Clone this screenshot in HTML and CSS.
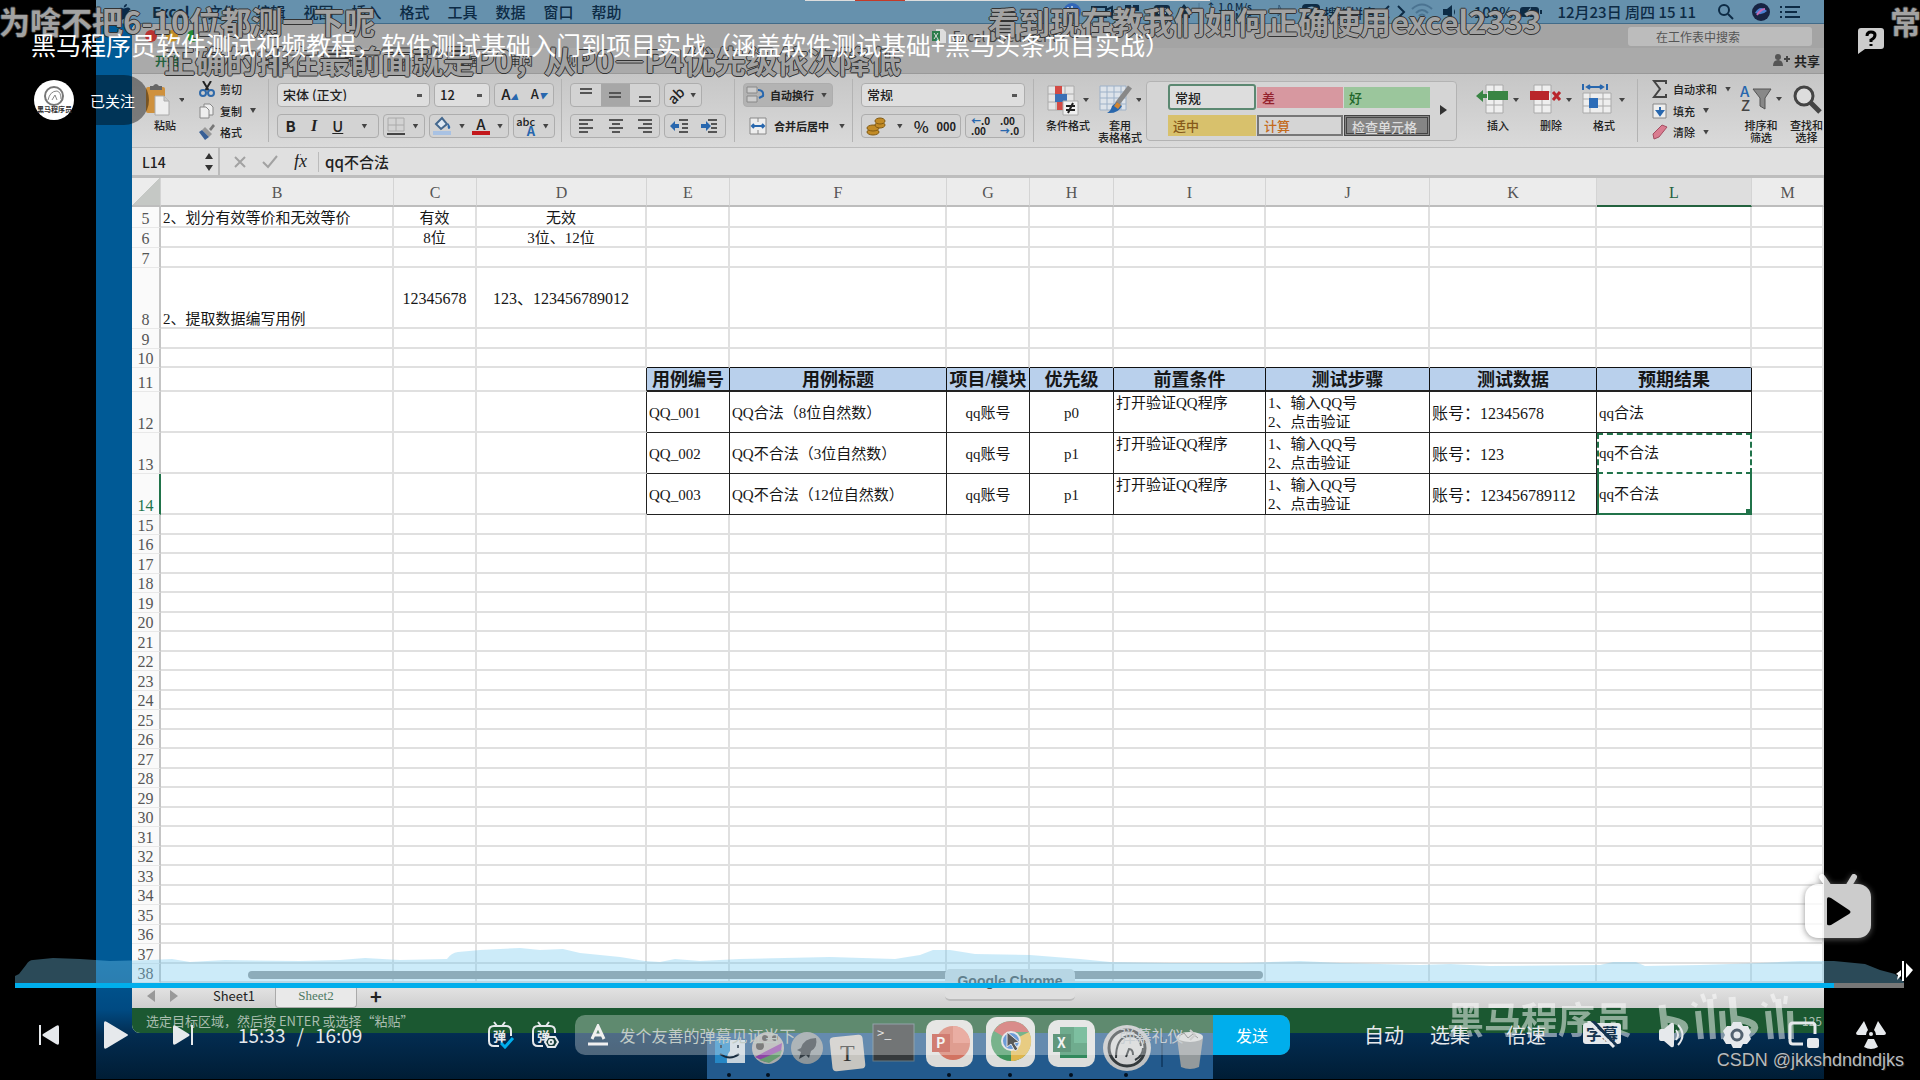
FILE: index.html
```html
<!DOCTYPE html>
<html lang="zh-CN">
<head>
<meta charset="utf-8">
<title>黑马程序员软件测试视频教程</title>
<link rel="stylesheet" href="styles.css">
</head>
<body>
<main class="player">
  <section class="video">
    <nav class="menubar">
      <svg class="apple" width="16" height="18" viewBox="0 0 16 18"><path d="M11 1c0 2-1.500 3.500-3.200 3.500C7.600 2.600 9.200 1.200 11 1zM8 5.500c1 0 2-.9 3.500-.9 1.200 0 2.400.6 3.100 1.700-2.800 1.700-2.300 5.400.5 6.500-.6 1.700-2 4-3.400 4-1.300 0-1.700-.8-3.200-.8s-2 .8-3.200.8C3.500 16.800 1 13 1 9.800c0-3.200 2-5.100 4.200-5.100 1.200 0 2.200.8 2.800.8z" fill="#0b2a49"/></svg>
      <b>Excel</b><span>文件</span><span>编辑</span><span>视图</span><span>插入</span><span>格式</span><span>工具</span><span>数据</span><span>窗口</span><span>帮助</span>
      <div class="tray">
        <svg width="400" height="22" viewBox="0 0 400 22" fill="#0d2b45">
          <circle cx="16" cy="11" r="9" fill="#3266b8"/><path d="M12 6v10M16 5v12M20 7v8" stroke="#a9c4de" stroke-width="2"/>
          <path d="M36 6h14v10H36zM50 9l6-3v10l-6-3" fill="none" stroke="#0d2b45" stroke-width="2"/>
          <path d="M69 4h6v6h-6zM77 4h6v6h-6zM69 12h6v6h-6zM77 12h6v6h-6z"/><rect x="98" y="4" width="16" height="14" rx="3"/><path d="M102 8h8M102 12h8" stroke="#7fa4bf" stroke-width="2"/>
          <path d="M122 11l6-8 6 8v6h-12z"/><path d="M143 2v18" stroke="#4f7895"/><text x="150" y="10" font-size="10">↑ 1.0 M/s</text><text x="150" y="20" font-size="10">↓ 0.2 M/s</text>
          <path d="M223 4l5 10-9-4 9-1-6 6z" fill="none" stroke="#35597a"/>
          <rect x="246" y="3" width="18" height="16" rx="4"/><path d="M251 8q5-3 9 0M250 14q5-3 9 0" stroke="#7fa4bf" stroke-width="2" fill="none"/><text x="268" y="17" font-size="13">搜狗拼音</text>
          <path d="M333 5l-6 6 6 6M342 5l6 6-6 6" fill="none" stroke="#0d2b45" stroke-width="2"/>
          <path d="M356 8q10-9 20 0M360 12q6-6 12 0M363 15q3-3 6 0" fill="none" stroke="#4b7391" stroke-width="2"/>
          <path d="M387 8h4l5-4v14l-5-4h-4zM398 8q2 3 0 6"/>
        </svg>
        <span>100%</span>
        <svg width="24" height="12" viewBox="0 0 24 12"><rect x="1" y="1" width="19" height="10" rx="3" fill="#0d2b45"/><path d="M22 4v4" stroke="#0d2b45" stroke-width="2"/><path d="M12 1l-5 6h4l-1 4 5-6h-4z" fill="#7fa4bf"/></svg>
        <span class="clock">12月23日 周四 15 11</span>
        <svg width="16" height="16" viewBox="0 0 16 16" fill="none" stroke="#0d2b45" stroke-width="2"><circle cx="6" cy="6" r="5"/><path d="M10 10l5 5"/></svg>
        <svg width="18" height="18" viewBox="0 0 18 18"><circle cx="9" cy="9" r="9" fill="#172443"/><path d="M3 10q5-9 12-2-5 5-12 2z" fill="#4b7fd0"/><path d="M5 12q4-6 8-6" stroke="#c36bb2" stroke-width="2" fill="none"/></svg>
        <svg class="list" width="20" height="14" viewBox="0 0 20 14" stroke="#0d2b45" stroke-width="2"><path d="M0 2h2M5 2h15M0 7h2M5 7h12M0 12h2M5 12h15"/></svg>
      </div>
    </nav>

    <div class="window">
      <header class="titlebar">
        <div class="lights"><i class="red"></i><i class="yellow"></i><i class="green"></i></div>
        <div class="doc"><svg width="14" height="14" viewBox="0 0 14 14"><path d="M4 0h7l3 3v11H4z" fill="#ddd"/><rect y="2" width="8" height="10" fill="#2d7d4b"/><path d="M2 4l4 6M6 4l-4 6" stroke="#ddd"/></svg>Excel Document</div>
        <input class="find" aria-label="搜索" placeholder="在工作表中搜索">
      </header>
      <div class="tabs">
        <a href="#" class="current">开始</a><a href="#">插入</a><a href="#">绘图</a><a href="#">页面布局</a><a href="#">公式</a><a href="#">数据</a><a href="#">审阅</a><a href="#">视图</a>
        <button class="share"><svg width="18" height="14" viewBox="0 0 18 14" fill="#555"><circle cx="6" cy="4" r="3"/><path d="M1 13q0-6 5-6t5 6z"/><path d="M12 6h6M15 3v6" stroke="#444" stroke-width="2"/></svg>共享</button>
      </div>

      <div class="ribbon">
        <div class="group clip">
          <button class="big paste"><svg width="38" height="32" viewBox="0 0 38 32"><rect y="3" width="19" height="26" rx="2" fill="#cf913d"/><path d="M4 6V2h3q3-4 6 0h3v4z" fill="#666"/><path d="M9 12h9l5 5v14H9z" fill="#eee" stroke="#aaa"/><path d="M18 12v5h5" fill="#ccc" stroke="#aaa"/><path d="M33 14h6l-3 4z" fill="#444"/></svg><span>粘贴</span></button>
          <div class="mini">
            <button><svg width="16" height="16" viewBox="0 0 16 16" fill="none"><path d="M4 0l6 10M12 0L6 10" stroke="#222" stroke-width="2"/><circle cx="4" cy="12" r="3" stroke="#2f69a9" stroke-width="2"/><circle cx="12" cy="12" r="3" stroke="#2f69a9" stroke-width="2"/></svg>剪切</button>
            <button><svg width="16" height="16" viewBox="0 0 16 16" fill="#eee" stroke="#888"><path d="M5 1h6l3 3v8H5z"/><path d="M1 4h6l3 3v8H1z"/></svg>复制<i class="caret"></i></button>
            <button><svg width="16" height="16" viewBox="0 0 16 16"><path d="M10 5l4-5 2 2-4 5z" fill="#777"/><path d="M6 3l7 7-3 3-7-7z" fill="#999"/><path d="M3 6l7 7-4 3-6-8z" fill="#385f95"/></svg>格式</button>
          </div>
        </div>
        <div class="group font">
          <div class="line"><select aria-label="字体" class="face"><option>宋体 (正文)</option></select><select aria-label="字号" class="size"><option>12</option></select><div class="set a2"><button>A<em>▲</em></button><button class="less">A<em>▼</em></button></div></div>
          <div class="line"><div class="set w102"><button><b>B</b></button><button class="it">I</button><button><u>U</u></button><i class="caret"></i></div>
            <div class="set w42"><svg width="18" height="18" viewBox="0 0 18 18" fill="none" stroke="#aaa"><path d="M1 1h16v13H1zM9 1v13M1 8h16"/><path d="M0 17h18" stroke="#444" stroke-width="2"/></svg><i class="caret"></i></div>
            <div class="set w80"><svg width="20" height="20" viewBox="0 0 20 20"><path d="M4 8l6-6 5 6-6 5z" fill="#dde8f3" stroke="#44688e" stroke-width="2"/><path d="M16 7q4 5 1 6-2 0-1-6z" fill="#2f69a9"/><path d="M1 15h18v4H1z" fill="#a9c2e3"/></svg><i class="caret"></i><span class="red-a">A</span><i class="caret"></i></div>
            <div class="set w42"><span class="abc">abc<b>A</b></span><i class="caret"></i></div></div>
        </div>
        <div class="group align">
          <div class="line"><div class="set w90 pick"><svg width="88" height="22" viewBox="0 0 88 22" stroke="#555" stroke-width="2"><path d="M30 0h29v22H30z" fill="#a7a7a7" stroke="none"/><path d="M9 5h12M9 9h12M38 9h12M38 13h12M68 13h12M68 17h12"/></svg></div><div class="set w38"><span class="slant">ab</span><i class="caret"></i></div></div>
          <div class="line"><div class="set w90"><svg width="88" height="22" viewBox="0 0 88 22" stroke="#555" stroke-width="2"><path d="M8 5h14M8 9h9M8 13h14M8 17h9M38 5h14M41 9h8M38 13h14M41 17h8M67 5h14M72 9h9M67 13h14M72 17h9"/></svg></div><div class="set w62"><svg width="60" height="22" viewBox="0 0 60 22" stroke="#555" stroke-width="2"><path d="M14 5h9M17 9h6M17 13h6M14 17h9M43 5h9M46 9h6M46 13h6M43 17h9"/><path d="M14 11H8M36 11h6" stroke="#2867ae" stroke-width="4"/><path d="M5 11l5-5v10zM46 11l-5-5v10z" fill="#2867ae" stroke="none"/></svg></div></div>
        </div>
        <div class="group wrap">
          <div class="line"><button class="set w90 dark"><svg width="20" height="18" viewBox="0 0 20 18" fill="none"><path d="M1 1h10v6H1zM1 10h10v6H1z" fill="#ccc" stroke="#888"/><path d="M12 4q6 0 5 6l-4 2" stroke="#2867ae" stroke-width="2"/></svg>自动换行<i class="caret"></i></button></div>
          <div class="line"><button class="plain"><svg width="18" height="18" viewBox="0 0 18 18"><path d="M1 1h16v16H1zM9 1v4M9 13v4" fill="#eee" stroke="#888"/><path d="M3 9h12M5 7L3 9l2 2M13 7l2 2-2 2" stroke="#2867ae" stroke-width="2" fill="none"/></svg>合并后居中<i class="caret"></i></button></div>
        </div>
        <div class="group number">
          <div class="line"><select aria-label="数字格式" class="fmt"><option>常规</option></select></div>
          <div class="line"><div class="set w100"><svg width="20" height="20" viewBox="0 0 20 20"><g fill="#c28b26" stroke="#815a12"><ellipse cx="7" cy="16" rx="6" ry="3"/><ellipse cx="7" cy="12" rx="6" ry="3"/><ellipse cx="14" cy="9" rx="5" ry="3"/><ellipse cx="14" cy="5" rx="5" ry="3"/></g></svg><i class="caret"></i><span class="pct">%</span><b>000</b></div><div class="set w60 dec"><span><b>←</b>.0<br>.00</span><span>.00<br><b>→</b>.0</span></div></div>
        </div>
        <div class="group looks">
          <button class="big"><svg width="42" height="32" viewBox="0 0 42 32"><path d="M1 2h26v24H1zM1 10h26M1 18h26M9 2v24M18 2v24" fill="#e5e5e5" stroke="#aaa"/><path d="M8 2h7v8H8zM10 18h6v8h-6z" fill="#d34a45"/><path d="M8 10h12v8H8z" fill="#3b70b5"/><path d="M16 17h15v14H16z" fill="#f0f0f0" stroke="#aaa"/><path d="M19 22h9M19 26h9M26 19l-5 10" stroke="#222" stroke-width="2"/><path d="M36 14h6l-3 4z" fill="#444"/></svg><span>条件格式</span></button>
          <button class="big"><svg width="42" height="32" viewBox="0 0 42 32"><path d="M1 2h26v24H1zM1 8h26M1 14h26M1 20h26M8 2v24M15 2v24M22 2v24" fill="#dde3ea" stroke="#9db1c8"/><path d="M31 3L18 20" stroke="#888" stroke-width="5"/><path d="M18 18l5 4q-4 8-15 7 4-2 5-7z" fill="#2a67ac"/><path d="M18 18l4 3-3 4-4-3z" fill="#d28633"/><path d="M37 14h6l-3 4z" fill="#444"/></svg><span>套用<br>表格格式</span></button>
        </div>
        <div class="gallery"><button class="normal">常规</button><button class="bad">差</button><button class="good">好</button><i class="next"></i><button class="mid">适中</button><button class="calc">计算</button><button class="check">检查单元格</button></div>
        <div class="group cells">
          <button class="big"><svg width="44" height="32" viewBox="0 0 44 32"><path d="M10 1h17v28H10zM18 1v28M10 8h17M10 21h17" fill="#eee" stroke="#aaa"/><path d="M12 7h20v9H12z" fill="#398544"/><path d="M0 12l7-6v4h4v4H7v4z" fill="#398544"/><path d="M37 14h6l-3 4z" fill="#444"/></svg><span>插入</span></button>
          <button class="big"><svg width="44" height="32" viewBox="0 0 44 32"><path d="M5 1h17v28H5zM13 1v28M5 8h17M5 21h17" fill="#eee" stroke="#aaa"/><path d="M1 7h19v9H1z" fill="#b9262b"/><path d="M24 8l7 8M31 8l-7 8" stroke="#b9262b" stroke-width="3"/><path d="M37 14h6l-3 4z" fill="#444"/></svg><span>删除</span></button>
          <button class="big"><svg width="44" height="32" viewBox="0 0 44 32"><path d="M1 9h28v20H1zM1 15h28M1 22h28M8 9v20M21 9v20" fill="#eee" stroke="#aaa"/><path d="M7 14h9v10H7z" fill="#2d6db8"/><path d="M1 0v6M25 0v6M5 3h16M8 1L5 3l3 2M18 1l3 2-3 2" stroke="#2867ae" stroke-width="2" fill="none"/><path d="M37 14h6l-3 4z" fill="#444"/></svg><span>格式</span></button>
        </div>
        <div class="group edit">
          <div class="mini">
            <button><svg width="16" height="18" viewBox="0 0 16 18"><path d="M14 4V1H2l6 8-6 8h12v-3" fill="none" stroke="#444" stroke-width="2"/></svg>自动求和<i class="caret"></i></button>
            <button><svg width="16" height="16" viewBox="0 0 16 16"><path d="M1 1h13v14H1z" fill="#eee" stroke="#888"/><path d="M8 4v5M5 8l3 4 3-4z" fill="#2867ae" stroke="#2867ae" stroke-width="2"/></svg>填充<i class="caret"></i></button>
            <button><svg width="16" height="16" viewBox="0 0 16 16"><path d="M1 10l9-9 5 2-8 10-5 2z" fill="#d97c90" stroke="#a34d61"/></svg>清除<i class="caret"></i></button>
          </div>
          <button class="big"><svg width="42" height="32" viewBox="0 0 42 32"><text x="0" y="13" font-size="15" fill="#2867ae">A</text><text x="1" y="27" font-size="15" fill="#444">Z</text><path d="M13 5h18l-6 9v11l-5-3v-8z" fill="#888" stroke="#555"/><path d="M36 13h6l-3 4z" fill="#444"/></svg><span>排序和<br>筛选</span></button>
          <button class="big"><svg width="30" height="32" viewBox="0 0 30 32"><circle cx="12" cy="12" r="9" fill="#ddd" stroke="#444" stroke-width="3"/><path d="M18 18l10 10" stroke="#444" stroke-width="5"/></svg><span>查找和<br>选择</span></button>
        </div>
      </div>

      <div class="formula">
        <div class="name">L14<svg width="8" height="20" viewBox="0 0 8 20" fill="#333"><path d="M0 7l4-6 4 6zM0 13l4 6 4-6z"/></svg></div>
        <svg class="acts" width="76" height="16" viewBox="0 0 76 16" fill="none" stroke="#a2a2a2" stroke-width="2"><path d="M1 3l10 10M11 3L1 13M29 8l5 5 9-11"/><text x="60" y="13" font-family="Liberation Serif" font-style="italic" font-size="18" fill="#222" stroke="none">fx</text></svg>
        <span class="value">qq不合法</span>
      </div>

      <table class="sheet">
        <colgroup><col class="c29"><col class="c233"><col class="c83"><col class="c170"><col class="c83"><col class="c217"><col class="c83"><col class="c84"><col class="c152"><col class="c164"><col class="c167"><col class="c155"><col class="c72"></colgroup>
        <thead><tr><th class="corner"></th><th>B</th><th>C</th><th>D</th><th>E</th><th>F</th><th>G</th><th>H</th><th>I</th><th>J</th><th>K</th><th class="on">L</th><th>M</th></tr></thead>
        <tbody>
          <tr class="h21"><th>5</th><td>2、划分有效等价和无效等价</td><td class="c">有效</td><td class="c">无效</td><td></td><td></td><td></td><td></td><td></td><td></td><td></td><td></td><td></td></tr>
          <tr class="h20"><th>6</th><td></td><td class="c">8位</td><td class="c">3位、12位</td><td></td><td></td><td></td><td></td><td></td><td></td><td></td><td></td><td></td></tr>
          <tr class="h20"><th>7</th><td></td><td></td><td></td><td></td><td></td><td></td><td></td><td></td><td></td><td></td><td></td><td></td></tr>
          <tr class="h61"><th>8</th><td class="low">2、提取数据编写用例</td><td class="c num">12345678</td><td class="c num">123、123456789012</td><td></td><td></td><td></td><td></td><td></td><td></td><td></td><td></td><td></td></tr>
          <tr class="h20"><th>9</th><td></td><td></td><td></td><td></td><td></td><td></td><td></td><td></td><td></td><td></td><td></td><td></td></tr>
          <tr class="h19 above"><th>10</th><td></td><td></td><td></td><td></td><td></td><td></td><td></td><td></td><td></td><td></td><td></td><td></td></tr>
          <tr class="h24 heads"><th>11</th><td></td><td></td><td></td><td>用例编号</td><td>用例标题</td><td>项目/模块</td><td>优先级</td><td>前置条件</td><td>测试步骤</td><td>测试数据</td><td>预期结果</td><td></td></tr>
          <tr class="h41 case"><th>12</th><td></td><td></td><td></td><td>QQ_001</td><td>QQ合法（8位自然数）</td><td class="c">qq账号</td><td class="c">p0</td><td class="top">打开验证QQ程序</td><td>1、输入QQ号<br>2、点击验证</td><td class="num">账号：12345678</td><td>qq合法</td><td></td></tr>
          <tr class="h41 case"><th>13</th><td></td><td></td><td></td><td>QQ_002</td><td>QQ不合法（3位自然数）</td><td class="c">qq账号</td><td class="c">p1</td><td class="top">打开验证QQ程序</td><td>1、输入QQ号<br>2、点击验证</td><td class="num">账号：123</td><td class="copied">qq不合法</td><td></td></tr>
          <tr class="h41 case"><th class="row-on">14</th><td></td><td></td><td></td><td>QQ_003</td><td>QQ不合法（12位自然数）</td><td class="c">qq账号</td><td class="c">p1</td><td class="top">打开验证QQ程序</td><td>1、输入QQ号<br>2、点击验证</td><td class="num">账号：123456789112</td><td class="selected">qq不合法</td><td></td></tr>
        </tbody>
        <tbody id="blank"></tbody>
      </table>
      <div class="hscroll"></div>
      <div class="sheets">
        <svg width="32" height="12" viewBox="0 0 32 12" fill="#999"><path d="M8 0v12L0 6zM23 0v12l8-6z"/></svg>
        <button>Sheet1</button><button class="active">Sheet2</button><button class="plus">+</button>
      </div>
      <div class="status"><span>选定目标区域，然后按 ENTER 或选择“粘贴”</span><small>125</small></div>
    </div>
    <div class="tip">Google Chrome</div>
    <div class="brand">黑马程序员
      <svg width="138" height="50" viewBox="0 0 138 50" fill="none" stroke="#fff"><path d="M6 12l4 34M76 4l4 42" stroke-width="7"/><path d="M10 26q26 4 16 13-8 7-16 6M80 26q26 4 16 13-8 7-16 6" stroke-width="7"/><path d="M42 18l3 28M54 6l3 40M66 18l2 28M112 18l3 28M122 6l4 40M134 18l1 28" stroke-width="6"/><path d="M36 10l5 3M46 1l3 8M58 1l1 5M106 10l5 3M116 1l3 8M130 3l-1 8" stroke-width="4"/></svg>
    </div>
    <svg class="dock" width="506" height="64" viewBox="0 0 506 64">
      <path d="M0 18h506v46H0z" fill="#235a8d"/>
      <path d="M8 25h16v23H8z" fill="#2687c5"/><path d="M23 25h15v23H20q-1-8 3-12z" fill="#c7d3dc"/><path d="M13 39q10 7 19 0M14 30v3M31 30v3" stroke="#172b3e" stroke-width="2" fill="none"/>
      <circle cx="61" cy="33" r="16" fill="#aaa"/><path d="M48 42l27-14-1 9-16 10z" fill="#8c45a5"/><path d="M52 45l23-10-2 6-11 7z" fill="#679b70"/><g fill="#444"><circle cx="53" cy="31" r="4"/><circle cx="58" cy="23" r="3"/><circle cx="68" cy="23" r="3"/></g>
      <circle cx="100" cy="33" r="16" fill="#8c959a"/><path d="M109 23q-12 0-15 10l-4 2 4 2-2 7 7-4 3 3 2-7q7-4 5-13z" fill="#333d44"/>
      <rect x="124" y="21" width="33" height="34" rx="4" fill="#c7c5c0" transform="rotate(-6 140 38)"/><text x="133" y="46" font-family="Liberation Serif" font-size="24" fill="#333">T</text>
      <rect x="166" y="9" width="41" height="37" fill="#363a3c" stroke="#647a86"/><text x="170" y="23" font-size="13" fill="#ddd">&gt;_</text>
      <rect x="219" y="5" width="47" height="47" rx="10" fill="#dcdbd8"/><circle cx="246" cy="28" r="17" fill="#d27361"/><path d="M246 11v17h17A17 17 0 0 0 246 11" fill="#e18b7c"/><rect x="225" y="19" width="18" height="18" fill="#bd4635"/><text x="229" y="33" font-size="14" font-weight="bold" fill="#eee">P</text>
      <rect x="279" y="2" width="49" height="50" rx="11" fill="#dcdddb"/><circle cx="304" cy="26" r="20" fill="#3e925b"/><path d="M304 26L287 16a20 20 0 0 1 35 1H304z" fill="#c95b58"/><path d="M304 26L322 17a20 20 0 0 1-18 29z" fill="#dfb64d"/><circle cx="304" cy="26" r="9" fill="#2f71c8" stroke="#ddd" stroke-width="2"/><path d="M300 17v15l4-3 4 7 3-2-4-6 5-1z" fill="#111" stroke="#ddd"/>
      <rect x="341" y="5" width="47" height="47" rx="10" fill="#dcdddb"/><path d="M353 12h27v31h-27z" fill="#32895d"/><path d="M367 12h13v16h-13z" fill="#45a478"/><path d="M346 19h18v18h-18z" fill="#1e6b44"/><text x="350" y="33" font-size="14" font-weight="bold" fill="#eee">X</text>
      <ellipse cx="420" cy="33" rx="24" ry="23" fill="#bfc1c2"/><circle cx="420" cy="33" r="18" fill="#d0d1d2" stroke="#343a3d" stroke-width="3"/><path d="M409 43q0-20 12-22 11-2 13 10M419 42l3-8q4 0 4 6M428 45q8-4 8-12" fill="none" stroke="#343a3d" stroke-width="2"/>
      <path d="M455 22v30" stroke="#133f69" stroke-width="2"/><path d="M470 23h26l-4 29q-9 4-18 0z" fill="#949a9c"/><ellipse cx="483" cy="22" rx="13" ry="5" fill="#d1d4d4"/><path d="M472 21l5-3 4 5 5-4 5 4" stroke="#777" fill="none"/>
      <g fill="#02101f"><circle cx="22" cy="60" r="2"/><circle cx="61" cy="60" r="2"/><circle cx="242" cy="60" r="2"/><circle cx="303" cy="60" r="2"/><circle cx="364" cy="60" r="2"/><circle cx="419" cy="60" r="2"/></g>
    </svg>
    <div class="notch"></div>
    <div class="strip"></div>
  </section>

  <div class="danmaku d1">为啥不把6-10位都测一下呢</div>
  <div class="danmaku d2">正确的排在最前面就是P0，从P0—P4优先级依次降低</div>
  <div class="danmaku d3">看到现在教我们如何正确使用excel2333</div>
  <div class="danmaku d4">常</div>

  <div class="overlay-top">
    <h1>黑马程序员软件测试视频教程，软件测试基础入门到项目实战（涵盖软件测试基础+黑马头条项目实战）</h1>
    <button class="follow"><svg width="40" height="40" viewBox="0 0 40 40"><circle cx="20" cy="20" r="20" fill="#fff"/><circle cx="20" cy="16" r="9" fill="none" stroke="#777" stroke-width="2"/><path d="M14 20q2-9 9-9 4 1 4 8M18 20l3-5 2 5" fill="none" stroke="#888"/><text x="3" y="32" font-size="7" font-weight="bold" fill="#333">黑马程序员</text></svg>已关注</button>
  </div>
  <svg class="help" width="26" height="26" viewBox="0 0 26 26"><path d="M3 0h20q3 0 3 3v15q0 3-3 3H7l-7 5V3q0-3 3-3z" fill="#ccc"/><path d="M9 8q0-4 4-4t4 3q0 3-4 5v2M13 16v2" fill="none" stroke="#000" stroke-width="3"/></svg>
  <svg class="tv" width="70" height="66" viewBox="0 0 70 66"><path d="M19 3l7 10M51 3l-6 10" stroke="#fff" stroke-width="6" stroke-linecap="round"/><rect x="2" y="10" width="66" height="54" rx="13" fill="#fff"/><path d="M24 25q0-3 4-1l18 12q3 2 0 4L28 51q-4 1-4-1z" fill="#000"/></svg>

  <div class="seek">
    <svg class="heat" viewBox="0 0 1889 35" preserveAspectRatio="none"><path d="M0 35V28l4-2 7-9q3-5 7-5l20-2 27 1 30 2 40-1 22-1 18 3 35-2 75 1 40-1 25-2 35 2 47-1q4-6 11-7l22-2 40-2 20 2 23-1 17 4 40 4 25 4 15 1 15-3 25 2 40-2 90-2 65 2 25-4 13-5h17l25 4 55 1 50 4 30 3 60 1h70l60-2 40 2 80 2 30-1 40 2 110-1 13-3h23l9 4 55-1 60-2 40-2h34l31 3 15 6 15 4 9 8v3z" fill="rgb(116 200 238 / 37%)"/></svg>
    <input type="range" aria-label="播放进度" min="0" max="969" value="933">
    <svg class="pin" width="18" height="22" viewBox="0 0 18 22"><path d="M7 1v20" stroke="#fff" stroke-width="2"/><path d="M10 3l7 7-5 6-2 2zM5 10v6l-4 4 1-5-2-1z" fill="#fff"/></svg>
  </div>

  <div class="controls">
    <button aria-label="上一个"><svg width="20" height="20" viewBox="0 0 20 20"><path d="M1 0v20" stroke="#e6e9ec" stroke-width="2"/><path d="M20 2v16q0 3-3 1L4 11q-1-1 0-2L17 1q3-2 3 1z" fill="#e6e9ec"/></svg></button>
    <button aria-label="播放"><svg width="24" height="28" viewBox="0 0 24 28"><path d="M0 2q0-3 3-1l20 12q2 1 0 2L3 27q-3 2-3-1z" fill="#e6e9ec"/></svg></button>
    <button aria-label="下一个"><svg width="20" height="20" viewBox="0 0 20 20"><path d="M19 0v20" stroke="#e6e9ec" stroke-width="2"/><path d="M0 2v16q0 3 3 1l13-8q1-1 0-2L3 1Q0-1 0 2z" fill="#e6e9ec"/></svg></button>
    <span class="time"><span>15:33</span><span>/</span><span>16:09</span></span>
    <div class="sender">
      <button aria-label="弹幕开关"><svg width="28" height="28" viewBox="0 0 28 28" fill="none" stroke="#e6e9ec" stroke-width="2"><path d="M7 1l3 4M18 1l-3 4M12 25H7q-5 0-5-5V10q0-5 5-5h12q5 0 5 5v5"/><text x="6" y="20" font-size="13" font-weight="bold" fill="#e6e9ec" stroke="none">弹</text><path d="M14 22l4 4 8-9" stroke="#00aeec" stroke-width="3"/></svg></button>
      <button aria-label="弹幕设置"><svg width="28" height="28" viewBox="0 0 28 28" fill="none" stroke="#e6e9ec" stroke-width="2"><path d="M7 1l3 4M18 1l-3 4M12 25H7q-5 0-5-5V10q0-5 5-5h12q5 0 5 5v2"/><text x="6" y="20" font-size="13" font-weight="bold" fill="#e6e9ec" stroke="none">弹</text><path d="M17 16h7l3 5-3 5h-7l-3-5z" fill="#173c39"/><circle cx="20" cy="21" r="2"/></svg></button>
      <div class="field">
        <svg width="20" height="22" viewBox="0 0 20 22" fill="none" stroke="#f0f0f0" stroke-width="3"><path d="M4 15L10 2l6 13M6 11h8"/><path d="M0 20h20"/></svg>
        <input aria-label="弹幕" placeholder="发个友善的弹幕见证当下">
        <a href="#">弹幕礼仪 <svg width="8" height="12" viewBox="0 0 8 12" fill="none" stroke="#ccc" stroke-width="2"><path d="M1 1l5 5-5 5"/></svg></a>
        <button class="send">发送</button>
      </div>
    </div>
    <div class="right">
      <span class="pair"><button>自动</button><button>选集</button></span><button>倍速</button>
      <button aria-label="字幕"><svg width="40" height="28" viewBox="0 0 40 28"><rect x="1" y="2" width="38" height="21" rx="3" fill="#e6e9ec"/><text x="4" y="19" font-size="16" font-weight="bold" fill="#15334f">字幕</text><path d="M9 -2l26 27" stroke="#15334f" stroke-width="3"/><path d="M6 0l26 26" stroke="#e6e9ec" stroke-width="3"/></svg></button>
      <button aria-label="音量"><svg width="28" height="26" viewBox="0 0 28 26"><path d="M1 9q0-2 2-2h3l7-6q3-1 3 2v20q0 3-3 2l-7-6H3q-2 0-2-2z" fill="#e6e9ec"/><path d="M18 8q4 5 0 10M20 3q9 10 0 20" fill="none" stroke="#e6e9ec" stroke-width="2"/></svg></button>
      <button aria-label="设置"><svg width="30" height="28" viewBox="0 0 30 28"><path d="M11 1h8l2 4 5 0 3 6-2 3 2 4-4 5-4 0-2 4h-8l-2-4-5 0-3-5 2-4-2-4 4-5h4z" fill="#e6e9ec"/><circle cx="15" cy="14" r="5" fill="none" stroke="#53616f" stroke-width="3"/></svg></button>
      <button aria-label="画中画"><svg width="32" height="28" viewBox="0 0 32 28"><path d="M15 23H5q-3 0-3-3V5q0-3 3-3h19q3 0 3 3v8" fill="none" stroke="#e6e9ec" stroke-width="3"/><rect x="19" y="17" width="12" height="10" rx="2" fill="#e6e9ec"/></svg></button>
      <button aria-label="退出全屏"><svg width="30" height="28" viewBox="0 0 30 28" fill="#e6e9ec"><path d="M8 0L0 12q0 2 2 2h8q0-3 2-5zM22 0l8 12q0 2-2 2h-8q0-3-2-5zM12 18h6l4 8q-7 4-14 0z"/><circle cx="15" cy="13" r="2"/></svg></button>
    </div>
  </div>
  <div class="credit">CSDN @jkkshdndndjks</div>
</main>
<script src="sheet.js"></script>
</body>
</html>
```
FILE: sheet.js
```js
const blank = document.getElementById('blank');
for (let n = 15; n <= 38; n++) {
  const row = blank.insertRow();
  row.className = n % 2 ? 'h20' : 'h19';
  const head = document.createElement('th');
  head.textContent = n;
  row.append(head);
  for (let c = 0; c < 12; c++) row.insertCell();
}
```
FILE: styles.css
```css
* { box-sizing: border-box; }
body { margin: 0; background: #000; font-family: "Noto Sans CJK SC", "Noto Sans", sans-serif; color: #222; }
button, input, select { font: inherit; color: inherit; border: 0; background: none; padding: 0; margin: 0; }
svg { display: block; flex: none; }
.player { position: relative; min-height: 100vh; overflow: hidden; background: #000; }
.video { position: relative; margin: 0 5%; overflow: hidden; background: linear-gradient(#005a96 0 960px, #004a82 1010px, #032c50 1035px, #001d35 1079px); }

/* macOS menu bar */
.menubar { display: flex; align-items: center; gap: 18px; height: 24px; padding: 0 24px 0 20px; background: #6691ad; border-bottom: 1px solid #416b89; font-size: 15px; font-weight: 500; line-height: 22px; color: #0d2b45; white-space: nowrap; }
.menubar b { margin-left: 2px; }
.tray { display: flex; align-items: center; gap: 18px; margin-left: auto; }
.tray > span:first-of-type { margin-right: -12px; }
.clock { margin: 0 4px 0 -4px; }
.list { margin-left: -8px; }

/* spreadsheet window */
.window { margin-left: 36px; border-radius: 6px 0 0 8px; overflow: hidden; background: #fff; }
.titlebar { display: flex; align-items: center; height: 24px; padding: 0 12px 0 13px; background: #a4a4a4; font-size: 14px; }
.lights { display: flex; gap: 9px; }
.lights i { width: 12px; height: 12px; border-radius: 50%; }
.red { background: #b93432; } .yellow { background: #c08e28; } .green { background: #238b34; }
.doc { display: flex; align-items: center; gap: 6px; margin: 0 auto 0 44%; color: #444; }
.find { width: 184px; height: 19px; padding-left: 28px; border-radius: 3px; background: #bcbcbc; font-size: 12px; }
.find::placeholder { color: #555; opacity: 1; }
.tabs { display: flex; align-items: center; gap: 31px; height: 26px; padding: 0 4px 0 23px; background: #aaa; border-bottom: 1px solid #999; font-size: 12px; line-height: 16px; }
.tabs a { color: #333; text-decoration: none; }
.tabs .current { color: #23623e; font-weight: bold; }
.share { display: flex; gap: 4px; margin-left: auto; font-size: 13px; font-weight: bold; }
.ribbon { display: flex; height: 74px; overflow: hidden; background: linear-gradient(#c6c6c6, #dadada); border-bottom: 1px solid #bbb; font-size: 11px; line-height: 12px; font-weight: 500; }
.group { display: flex; flex: none; margin: 5px 0; border-right: 1px solid #b3b3b3; }
.font, .align, .wrap, .number { flex-direction: column; justify-content: center; gap: 7px; padding-left: 8px; }
.clip { width: 137px; padding-left: 14px; gap: 15px; }
.font { width: 293px; } .align { width: 173px; } .wrap { width: 118px; } .number { width: 181px; }
.looks { width: 112px; padding-left: 10px; gap: 4px; border: 0; }
.cells { width: 173px; padding-left: 10px; gap: 7px; }
.edit { width: 190px; padding-left: 14px; gap: 8px; border: 0; }
.big { display: flex; flex: none; flex-direction: column; align-items: center; gap: 3px; padding-top: 5px; white-space: nowrap; }
.looks .big { width: 48px; }
.cells .big { width: 46px; }
.mini { display: flex; flex: none; flex-direction: column; justify-content: space-between; width: 68px; }
.mini button { display: flex; align-items: center; gap: 5px; height: 20px; white-space: nowrap; }
.edit .mini { width: 80px; }
.caret { flex: none; width: 6px; height: 5px; margin: 0 3px; background: #444; clip-path: polygon(0 0, 100% 0, 50% 100%); }
.line { display: flex; gap: 4px; height: 24px; }
.set, .ribbon select { display: flex; align-items: center; justify-content: space-around; height: 24px; border: 1px solid #adadad; border-radius: 4px; background: #d3d3d3; }
.ribbon select { appearance: none; padding: 0 5px; font-size: 13px; background: #dedede linear-gradient(#555, #555) right 7px center / 5px 3px no-repeat; }
.face { width: 153px; } .size { width: 56px; } .fmt { width: 164px; }
.a2 { width: 60px; font-size: 15px; } .a2 em { font-size: 8px; color: #2867ae; } .less { font-size: 13px; }
.w102 { width: 102px; font-size: 15px; } .it { font: italic bold 16px "Liberation Serif", serif; }
.w42 { width: 42px; } .w80 { width: 80px; } .w90 { width: 90px; } .w38 { width: 38px; } .w62 { width: 62px; } .w100 { width: 100px; } .w60 { width: 60px; }
.pick { overflow: hidden; }
.red-a { width: 18px; border-bottom: 4px solid #c3181c; font-size: 15px; line-height: 14px; text-align: center; }
.abc { line-height: 9px; } .abc b { display: block; color: #2867ae; font-size: 13px; text-align: right; }
.slant { font-size: 14px; transform: rotate(-45deg); }
.dark { background: #b3b3b3; font-weight: bold; white-space: nowrap; }
.plain { display: flex; align-items: center; gap: 7px; padding-left: 6px; font-weight: bold; }
.pct { font-size: 16px; }
.dec { font-size: 10px; line-height: 10px; font-weight: bold; } .dec b { color: #2867ae; }
.gallery { display: grid; flex: none; grid-template-columns: 88px 86px 86px 14px; grid-template-rows: 26px 22px; align-items: center; gap: 4px 1px; width: 311px; height: 60px; margin: 7px 8px 0 0; padding: 2px 0 2px 21px; border: 1px solid #b3b3b3; border-radius: 4px; background: #d5d5d5; }
.gallery button { height: 21px; padding-left: 5px; text-align: left; font-size: 13px; line-height: 17px; }
.gallery .normal { height: 26px; border: 2px solid #5b8871; border-radius: 3px; background: #ddd; }
.bad { background: #d798a0; color: #94222d; } .good { background: #9bc69c; color: #216529; }
.mid { background: #d8c16c; color: #86591a; } .calc { border: 2px solid #777; color: #c46b1d; }
.gallery .check { border: 3px double #444; background: #858585; color: #ddd; }
.next { grid-row: 1 / 3; grid-column: 4; width: 7px; height: 10px; margin-left: 9px; background: #333; clip-path: polygon(0 0, 100% 50%, 0 100%); }
.formula { display: flex; align-items: center; height: 30px; background: #e0e0e0; border-bottom: 3px solid #bdbdbd; font-size: 15px; font-weight: 500; }
.name { display: flex; align-items: center; justify-content: space-between; width: 88px; height: 27px; padding: 0 5px 0 10px; border-right: 2px solid #bbb; font-size: 14px; }
.acts { margin: 0 8px 0 14px; }
.value { padding-left: 6px; border-left: 1px solid #bbb; line-height: 20px; }

/* cell grid */
.sheet { width: 100%; table-layout: fixed; border-spacing: 0; font: 15px/19px "Liberation Serif", "Noto Sans CJK SC", serif; white-space: nowrap; color: #161616; }
.c29 { width: 29px; } .c72 { width: 72px; } .c83 { width: 83px; } .c84 { width: 84px; } .c152 { width: 152px; } .c155 { width: 155px; } .c164 { width: 164px; } .c167 { width: 167px; } .c170 { width: 170px; } .c217 { width: 217px; } .c233 { width: 233px; }
.sheet td { padding: 2px 2px 0; border-right: 2px solid #e0e0e0; border-bottom: 2px solid #e0e0e0; line-height: 16px; }
.sheet th { padding: 0; font-weight: normal; color: #555; }
.sheet thead th { height: 29px; background: #ececec; border-right: 1px solid #d4d4d4; border-bottom: 2px solid #bdbdbd; font-size: 16px; padding-top: 2px; }
.sheet tbody th { border-right: 2px solid #c5c5c5; border-bottom: 1px solid #e8e8e8; background: #fafafa; font-size: 16px; line-height: 17px; vertical-align: bottom; }
.corner { background: linear-gradient(135deg, #ececec 50%, #c5c8c5 50%) !important; }
.sheet thead .on { background: #dedede; color: #23623e; border-bottom-color: #23623e; }
.sheet .row-on { color: #21734a; border-right-color: #21734a; }
.h19 { height: 19px; } .h20 { height: 20px; } .h21 { height: 21px; } .h24 { height: 24px; } .h41 { height: 41px; } .h61 { height: 61px; }
.c { text-align: center; }
.num { font-size: 16px; }
.sheet .low { vertical-align: bottom; }
.sheet .top { vertical-align: top; }
.above td:nth-child(n+5):nth-child(-n+12) { border-bottom: 1px solid #111; }
.heads td:nth-child(n+5):nth-child(-n+12) { padding: 2px 0 0; border-right: 1px solid #111; border-bottom: 2px solid #222; background: #b9d0ec; font-size: 18px; line-height: 20px; font-weight: bold; text-align: center; }
.case td:nth-child(n+5):nth-child(-n+12) { border-right: 1px solid #222; border-bottom: 1px solid #222; line-height: 19px; }
.heads td:nth-child(4), .case td:nth-child(4) { border-right: 1px solid #222; }
.case .copied.copied.copied { border: 2px dashed #21734a; padding: 0; }
.case .selected.selected.selected { border: 2px solid #21734a; border-top: 0; padding: 2px 0 0; background: linear-gradient(#21734a, #21734a) right bottom / 4px 4px no-repeat; }
.hscroll { position: relative; width: 60%; height: 8px; margin: -12px 0 4px 116px; border-radius: 4px; background: #9b9b9b; }
.sheets { display: flex; align-items: center; height: 25px; padding-left: 15px; background: linear-gradient(#e6e6e6, #cecece); border-top: 1px solid #ccc; font-size: 13px; }
.sheets button { height: 24px; line-height: 24px; }
.sheets button:first-of-type { width: 82px; margin-left: 14px; }
.sheets .active { width: 82px; border: 1px solid #aaa; border-top: 0; border-radius: 0 0 4px 4px; background: #e9e9e9; color: #4d7963; font-family: "Liberation Serif", serif; }
.sheets .plus { margin-left: 13px; font-size: 20px; font-weight: bold; }
.status { display: flex; align-items: center; justify-content: space-between; height: 25px; padding: 0 2px 0 14px; background: #1b5831; color: #a9bdaf; font-size: 13px; }
.status small { font-size: 12px; }
.tip { position: absolute; left: 849px; bottom: 78px; width: 130px; height: 32px; border-radius: 5px; background: #dedede; border-bottom: 2px solid #bbb; font: bold 14px/24px "Liberation Sans", sans-serif; text-align: center; color: #555; }
.notch { position: absolute; left: 614px; right: 614px; top: 0; height: 1px; background: linear-gradient(90deg, #ddd 40%, transparent 0); background: linear-gradient(90deg, transparent 19%, #ddd 19% 29%, #c43a28 29% 39%, #ddd 39%); }
.strip { height: 46px; }
.dock { position: absolute; left: 611px; bottom: 0; }
.brand { position: absolute; right: 30px; bottom: 36px; display: flex; align-items: center; gap: 24px; font-size: 37px; line-height: 50px; font-weight: bold; color: #fff; opacity: .5; }

/* player overlay */
.danmaku { position: absolute; font-size: 31px; line-height: 36px; font-weight: bold; color: #a2a2a2; white-space: nowrap; text-shadow: 1px 0 #333, -1px 0 #333, 0 1px #333, 0 -1px #333; }
.d1 { left: -1px; top: 3px; } .d2 { left: 164px; top: 42px; } .d3 { left: 988px; top: 3px; } .d4 { left: 1890px; top: 3px; }
.overlay-top { position: absolute; left: 31px; top: 26px; }
h1 { margin: 0; font-size: 25px; line-height: 36px; font-weight: 400; color: #fff; white-space: nowrap; }
.follow { display: flex; align-items: center; gap: 16px; height: 50px; margin: 13px 0 0 -2px; padding: 0 14px 0 5px; border-radius: 25px; background: rgb(0 0 0 / 42%); color: #fff; font-size: 15px; }
.help { position: absolute; right: 36px; top: 28px; }
.tv { position: absolute; right: 47px; bottom: 140px; opacity: .8; filter: drop-shadow(0 1px 3px #777); }
.seek { position: absolute; left: 15px; right: 16px; bottom: 92px; }
.heat { width: 100%; height: 35px; }
.seek input { display: block; appearance: none; width: 100%; height: 5px; background: linear-gradient(90deg, #00aeec 96.3%, #777 96.3%); }
.seek input::-webkit-slider-thumb { appearance: none; width: 1px; height: 1px; }
.pin { position: absolute; right: -10px; top: 12px; }
.controls { position: absolute; left: 0; right: 0; bottom: 25px; display: flex; align-items: center; gap: 45px; height: 40px; padding: 0 34px 0 39px; color: #e6e9ec; font-size: 20px; }
.controls button { flex: none; line-height: 28px; }
.time { display: flex; gap: 11px; font: 19px/28px "Noto Sans CJK SC", sans-serif; white-space: nowrap; }
.sender { display: flex; flex: 0 1 803px; align-items: center; gap: 16px; margin-left: 80px; }
.field { display: flex; flex: 1; align-items: center; height: 40px; padding-left: 13px; border-radius: 10px; overflow: hidden; background: rgb(255 255 255 / 30%); font-size: 16px; }
.field input { flex: 1; min-width: 0; margin-left: 11px; }
.field input::placeholder { color: #c2ccc7; opacity: 1; }
.field a { display: flex; align-items: center; gap: 6px; margin-right: 16px; color: #c8ced2; text-decoration: none; }
.controls .send { width: 77px; height: 40px; background: #00aeec; color: #fff; }
.right { display: flex; align-items: center; gap: 36px; margin-left: auto; }
.pair { display: flex; gap: 26px; }
.credit { position: absolute; right: 16px; bottom: 8px; font: 18px/24px "Liberation Sans", sans-serif; color: #b7bbbf; text-shadow: 1px 1px #222; }
```
